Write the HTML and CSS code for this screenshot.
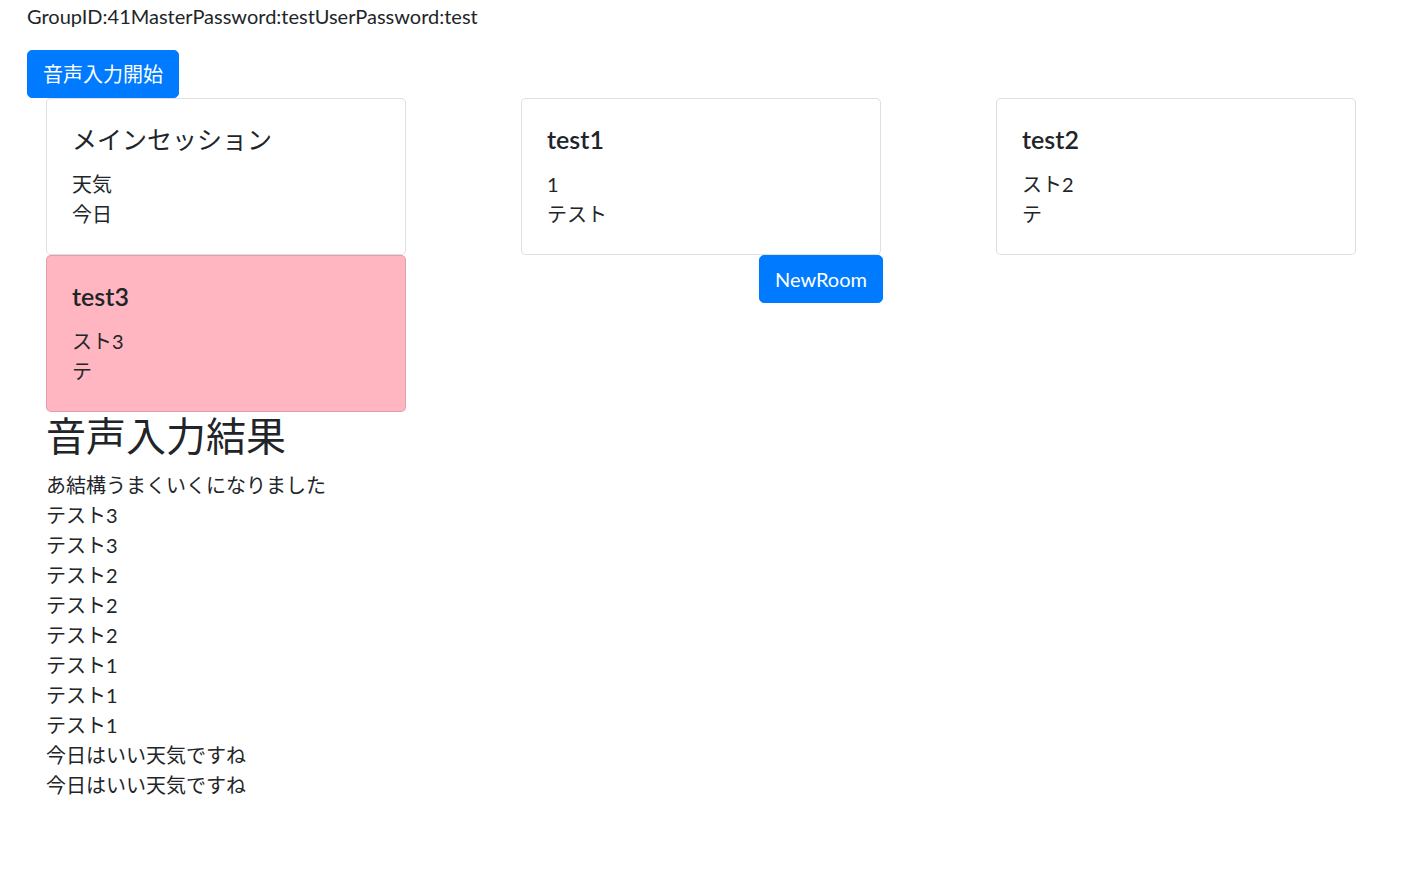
FILE: index.html
```html
<html>
<head>
<meta charset="utf-8">
<link rel="stylesheet" href="styles.css">
</head>

<body>

<div class="page">

<p class="group-info">GroupID:41MasterPassword:testUserPassword:test</p>

<button class="btn">音声入力開始</button>

<div class="room-list">
  <div class="room-col">
    <div class="card">
      <h5 class="card-title jp">メインセッション</h5>
      <p class="card-text">天気<br>今日</p>
    </div>
  </div>
  <div class="room-col">
    <div class="card">
      <h5 class="card-title">test1</h5>
      <p class="card-text">1<br>テスト</p>
    </div>
  </div>
  <div class="room-col">
    <div class="card">
      <h5 class="card-title">test2</h5>
      <p class="card-text">スト2<br>テ</p>
    </div>
  </div>
  <div class="room-col">
    <div class="card active">
      <h5 class="card-title">test3</h5>
      <p class="card-text">スト3<br>テ</p>
    </div>
  </div>
  <div class="room-col">
    <div class="new-room">
      <button class="btn">NewRoom</button>
    </div>
  </div>
</div>

<div class="results">
  <h2>音声入力結果</h2>
  <p>あ結構うまくいくになりました<br>
  テスト3<br>
  テスト3<br>
  テスト2<br>
  テスト2<br>
  テスト2<br>
  テスト1<br>
  テスト1<br>
  テスト1<br>
  今日はいい天気ですね<br>
  今日はいい天気ですね</p>
</div>

</div>

</body>
</html>
```

FILE: styles.css
```css
body    { margin:0;font-family:"Lato","Noto Sans CJK JP",sans-serif;
          font-size:20px;line-height:30px;color:#212529;background:#fff }
p       { margin:0 0 20px 0 }
h2      { margin:0 0 10px 0;font-size:40px;font-weight:400;line-height:48px }
h5      { margin:0;font-size:25px;font-weight:500;line-height:30px }

.page        { padding:0 27px }
.group-info  { margin-bottom:20px;padding-top:1px;height:29px }

.btn    { display:inline-block;font:inherit;color:#fff;background:#007bff;
          border:1px solid #007bff;border-radius:5px;padding:8px 15px;
          line-height:30px;cursor:pointer }

.room-list   { display:grid;grid-template-columns:475px 475px 1fr }
.room-col    { padding:0 19px }

.card        { width:360px;box-sizing:border-box;padding:25px;
               border:1px solid rgba(0,0,0,.125);border-radius:5px;background:#fff }
.card.active { background:#ffb6c1 }
.card-title  { margin-bottom:15px;font-weight:600 }
.card-title.jp { font-weight:400 }
.card-text   { margin:0 }

.new-room    { width:362px;display:flex;justify-content:flex-end }

.results     { padding:0 19px }
.results p   { margin:0 }
```
